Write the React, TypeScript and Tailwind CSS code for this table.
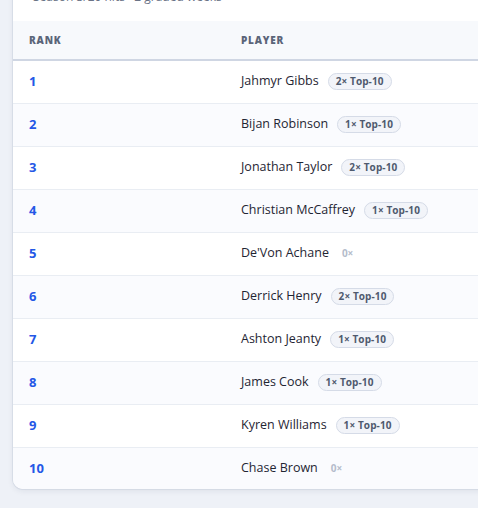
import React from 'react'

const players = [
  { rank: 1, name: 'Jahmyr Gibbs', hits: 2 },
  { rank: 2, name: 'Bijan Robinson', hits: 1 },
  { rank: 3, name: 'Jonathan Taylor', hits: 2 },
  { rank: 4, name: 'Christian McCaffrey', hits: 1 },
  { rank: 5, name: "De'Von Achane", hits: 0 },
  { rank: 6, name: 'Derrick Henry', hits: 2 },
  { rank: 7, name: 'Ashton Jeanty', hits: 1 },
  { rank: 8, name: 'James Cook', hits: 1 },
  { rank: 9, name: 'Kyren Williams', hits: 1 },
  { rank: 10, name: 'Chase Brown', hits: 0 },
]

function HitBadge({ hits }: { hits: number }) {
  if (hits === 0) {
    return <span className="ml-[8px] px-[5px] text-[10px] font-bold text-[#b4bccb]">0×</span>
  }
  return (
    <span className="ml-[9px] inline-flex items-center h-[17px] px-[7px] rounded-full border border-[#d5dbe7] bg-[#f2f4f9] text-[10px] font-bold tracking-[0.01em] text-[#4f5a6e]">
      {hits}× Top-10
    </span>
  )
}

export default function App() {
  return (
    <div className="w-[478px] h-[508px] overflow-hidden bg-[#eef1f7] pl-[13px] font-['Open_Sans',sans-serif]">
      <div className="-mt-[55px] w-[640px] rounded-[10px] bg-white shadow-[0_0_0_1px_rgba(200,208,222,0.5),0_2px_6px_rgba(30,41,70,0.08)] overflow-hidden">
        <div className="px-5 pt-4 pb-4">
          <h2 className="text-lg leading-7 font-bold text-[#1e293b]">Top-10 Hit Rate</h2>
          <p className="text-xs leading-4 text-[#6b7487]">Season 3/20 hits · 2 graded weeks</p>
        </div>
        <table className="w-full border-collapse">
          <thead>
            <tr className="bg-[#f7f9fc] border-b-2 border-[#cfd6e3]">
              <th className="h-[39px] w-[212px] pl-4 pt-[1px] text-left text-[10px] font-extrabold tracking-[0.08em] text-[#5b6579]">RANK</th>
              <th className="pl-4 pt-[1px] text-left text-[10px] font-extrabold tracking-[0.08em] text-[#5b6579]">PLAYER</th>
            </tr>
          </thead>
          <tbody>
            {players.map((p) => (
              <tr key={p.rank} className={`h-[43px] last:h-[42px] border-b border-[#e9edf3] last:border-b-0 ${p.rank % 2 === 0 ? 'bg-[#fafbfe]' : 'bg-white'}`}>
                <td className="pl-4 text-[13px] font-bold text-[#2457e6]">{p.rank}</td>
                <td className="pl-4 text-[12.5px] text-[#1f2533]">
                  <div className="flex items-center">
                    <span>{p.name}</span>
                    <HitBadge hits={p.hits} />
                  </div>
                </td>
              </tr>
            ))}
          </tbody>
        </table>
      </div>
    </div>
  )
}
